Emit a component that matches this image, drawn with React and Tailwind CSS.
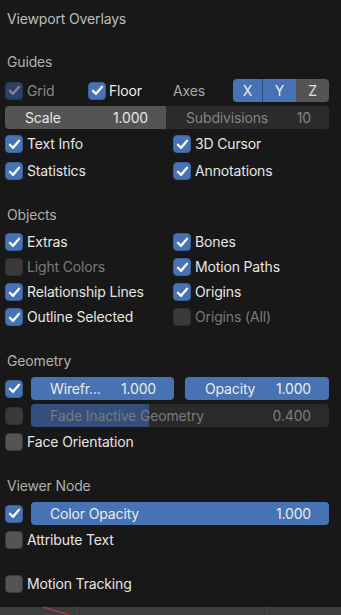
import React from "react";

const FONT = { fontFamily: "Inter, 'Noto Sans', sans-serif" };

function Check({ on = false, dim = false }) {
  let bg = "bg-[#545454] border-[#3a3a3a]";
  if (on && !dim) bg = "bg-[#4772b3] border-[#3b5f96]";
  if (on && dim) bg = "bg-[#2c4163] border-[#25375a]";
  if (!on && dim) bg = "bg-[#3a3a3a] border-[#2e2e2e]";
  return (
    <div className={`w-[18px] h-[18px] rounded-[4px] border shrink-0 flex items-center justify-center ${bg}`}>
      {on && (
        <svg width="13" height="13" viewBox="0 0 12 12">
          <path
            d="M1.8 6.3 L4.7 9.1 L10.2 2.6"
            fill="none"
            stroke={dim ? "#7c8596" : "#ffffff"}
            strokeWidth="2.1"
            strokeLinecap="round"
            strokeLinejoin="round"
          />
        </svg>
      )}
    </div>
  );
}

function CheckItem({ label, on, dim, textDim, className = "" }) {
  return (
    <div className={`flex items-center gap-[4px] ${className}`}>
      <Check on={on} dim={dim} />
      <span className={textDim ? "text-[#7a7a7a]" : "text-[#e6e6e6]"}>{label}</span>
    </div>
  );
}

function Header({ children, className = "" }) {
  return (
    <div className={`h-[20px] flex items-center pl-[7px] text-[#b0b0b0] ${className}`}>{children}</div>
  );
}

export default function App() {
  return (
    <div className="w-[341px] h-[615px] bg-[#181818] flex flex-col overflow-hidden text-[14px] tracking-[-0.15px] leading-none" style={FONT}>
      <Header className="mt-[9px] text-[#bdbdbd]">Viewport Overlays</Header>

      <Header className="mt-[23px]">Guides</Header>

      <div className="mt-[7px] h-[23px] flex items-center pl-[5px] pr-[12px]">
        <div className="w-[83px] flex items-center gap-[4px]">
          <Check on dim />
          <span className="text-[#8a8a8a]">Grid</span>
        </div>
        <div className="w-[85px] flex items-center gap-[3px]">
          <Check on />
          <span className="text-[#ececec]">Floor</span>
        </div>
        <span className="w-[60px] text-[#a8a8a8]">Axes</span>
        <div className="flex h-[23px] rounded-[4px] overflow-hidden ml-auto">
          <div className="w-[30px] bg-[#4772b3] text-[#f0f0f0] flex items-center justify-center border-r border-[#2d4a78]">X</div>
          <div className="w-[33px] bg-[#4772b3] text-[#f0f0f0] flex items-center justify-center">Y</div>
          <div className="w-[33px] bg-[#545454] text-[#e0e0e0] flex items-center justify-center">Z</div>
        </div>
      </div>

      <div className="mt-[4px] mx-[5px] w-[324px] h-[23px] flex rounded-[4px] overflow-hidden">
        <div className="w-[161px] bg-[#545454] flex items-center justify-between pl-[20px] pr-[18px] text-[#e6e6e6]">
          <span>Scale</span>
          <span>1.000</span>
        </div>
        <div className="flex-1 bg-[#2b2b2b] flex items-center justify-between pl-[20px] pr-[18px] text-[#858585]">
          <span>Subdivisions</span>
          <span>10</span>
        </div>
      </div>

      <div className="mt-[5px] h-[20px] flex items-center pl-[5px]">
        <CheckItem label="Text Info" on className="w-[168px]" />
        <CheckItem label="3D Cursor" on />
      </div>
      <div className="mt-[7px] h-[20px] flex items-center pl-[5px]">
        <CheckItem label="Statistics" on className="w-[168px]" />
        <CheckItem label="Annotations" on />
      </div>

      <Header className="mt-[24px]">Objects</Header>

      <div className="mt-[7px] h-[20px] flex items-center pl-[5px]">
        <CheckItem label="Extras" on className="w-[168px]" />
        <CheckItem label="Bones" on />
      </div>
      <div className="mt-[5px] h-[20px] flex items-center pl-[5px]">
        <CheckItem label="Light Colors" dim textDim className="w-[168px]" />
        <CheckItem label="Motion Paths" on />
      </div>
      <div className="mt-[5px] h-[20px] flex items-center pl-[5px]">
        <CheckItem label="Relationship Lines" on className="w-[168px]" />
        <CheckItem label="Origins" on />
      </div>
      <div className="mt-[5px] h-[20px] flex items-center pl-[5px]">
        <CheckItem label="Outline Selected" on className="w-[168px]" />
        <CheckItem label="Origins (All)" dim textDim />
      </div>

      <Header className="mt-[24px]">Geometry</Header>

      <div className="mt-[6px] h-[23px] flex items-center pl-[5px] pr-[12px]">
        <Check on />
        <div className="ml-[8px] w-[143px] h-[23px] rounded-[4px] bg-[#4772b3] flex items-center justify-between pl-[19px] pr-[18px] text-[#ececec]">
          <span>Wirefr...</span>
          <span>1.000</span>
        </div>
        <div className="ml-[11px] w-[144px] h-[23px] rounded-[4px] bg-[#4772b3] flex items-center justify-between pl-[20px] pr-[18px] text-[#ececec]">
          <span>Opacity</span>
          <span>1.000</span>
        </div>
      </div>

      <div className="mt-[4px] h-[23px] flex items-center pl-[5px] pr-[12px]">
        <Check dim />
        <div className="ml-[8px] w-[298px] h-[23px] rounded-[4px] bg-[#2a2a2a] overflow-hidden relative flex items-center justify-between pl-[19px] pr-[18px] text-[#7a7a7a]">
          <div className="absolute left-0 top-0 bottom-0 w-[118px] bg-[#344f7c]" />
          <span className="relative">Fade Inactive Geometry</span>
          <span className="relative">0.400</span>
        </div>
      </div>

      <div className="mt-[5px] h-[20px] flex items-center pl-[5px]">
        <CheckItem label="Face Orientation" />
      </div>

      <Header className="mt-[24px]">Viewer Node</Header>

      <div className="mt-[6px] h-[23px] flex items-center pl-[5px] pr-[12px]">
        <Check on />
        <div className="ml-[8px] w-[298px] h-[23px] rounded-[4px] bg-[#4772b3] flex items-center justify-between pl-[19px] pr-[18px] text-[#ececec]">
          <span>Color Opacity</span>
          <span>1.000</span>
        </div>
      </div>

      <div className="mt-[5px] h-[20px] flex items-center pl-[5px]">
        <CheckItem label="Attribute Text" />
      </div>

      <div className="mt-[24px] h-[20px] flex items-center pl-[5px]">
        <CheckItem label="Motion Tracking" />
      </div>

      <div className="mt-auto h-[8px] bg-[#3d3d3d]">
        <svg width="341" height="8" viewBox="0 0 341 8">
          <line x1="76.5" y1="0" x2="76.5" y2="8" stroke="#4a4a4a" strokeWidth="1" />
          <line x1="267.5" y1="0" x2="267.5" y2="8" stroke="#4a4a4a" strokeWidth="1" />
          <line x1="43" y1="0" x2="69" y2="8" stroke="#a83a4e" strokeWidth="1.5" />
        </svg>
      </div>
    </div>
  );
}
